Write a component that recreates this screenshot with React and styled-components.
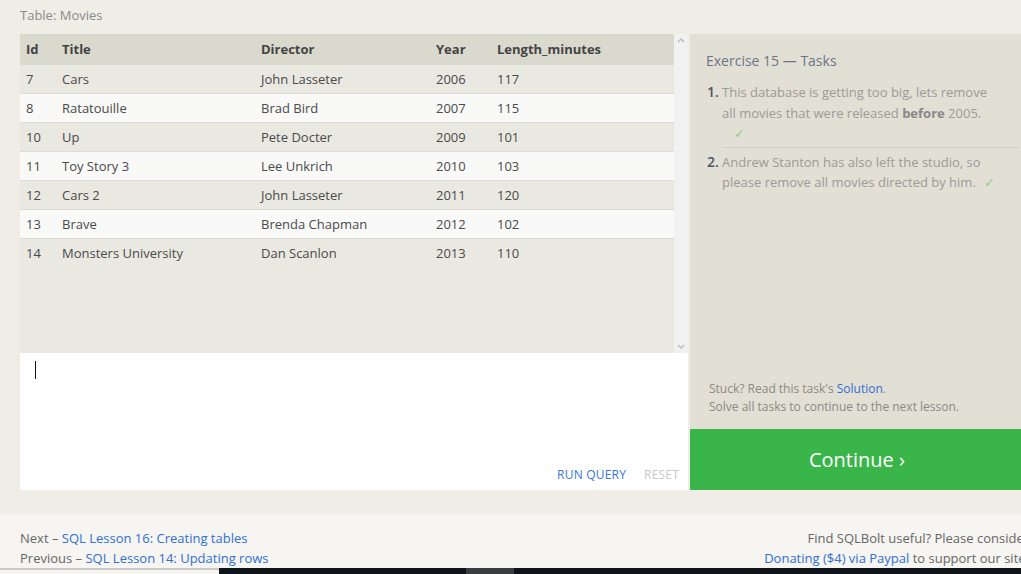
import styled, { createGlobalStyle } from 'styled-components';

const GlobalStyle = createGlobalStyle`
  html, body {
    margin: 0;
    padding: 0;
    overflow: hidden;
    background: #efede6;
  }
  body {
    font-family: "Open Sans", "Noto Sans", sans-serif;
    color: #444;
  }
  a {
    color: #2f6fd6;
    text-decoration: none;
  }
`;

const movies = [
  [7, 'Cars', 'John Lasseter', 2006, 117],
  [8, 'Ratatouille', 'Brad Bird', 2007, 115],
  [10, 'Up', 'Pete Docter', 2009, 101],
  [11, 'Toy Story 3', 'Lee Unkrich', 2010, 103],
  [12, 'Cars 2', 'John Lasseter', 2011, 120],
  [13, 'Brave', 'Brenda Chapman', 2012, 102],
  [14, 'Monsters University', 'Dan Scanlon', 2013, 110],
];

const columns = [
  { key: 'Id', width: 42, pad: 6 },
  { key: 'Title', width: 199 },
  { key: 'Director', width: 175 },
  { key: 'Year', width: 61 },
  { key: 'Length_minutes' },
];

const Page = styled.div`
  width: 1021px;
  height: 574px;
  display: flex;
  flex-direction: column;
  overflow: hidden;
`;

const Main = styled.div`
  padding: 5px 0 24px 20px;
`;

const Caption = styled.div`
  font-size: 13px;
  color: #8a8a8a;
  height: 29px;
  line-height: 20px;
`;

const Workspace = styled.div`
  display: grid;
  grid-template-columns: 668px 340px;
  column-gap: 2px;
`;

const LeftCol = styled.div`
  display: flex;
  flex-direction: column;
`;

const TableArea = styled.div`
  display: flex;
  height: 319px;
`;

const TableWrap = styled.div`
  flex: 1;
  background: #e9e8e1;
`;

const Table = styled.table`
  width: 100%;
  table-layout: fixed;
  border-collapse: collapse;
  font-size: 13px;
`;

const Th = styled.th`
  text-align: left;
  font-weight: 700;
  color: #444;
  background: #dad9ce;
  height: 31px;
  padding: 0 0 1px ${(p) => p.$pad || 0}px;
  box-sizing: border-box;
  width: ${(p) => (p.$w ? `${p.$w}px` : 'auto')};
`;

const Tr = styled.tr`
  background: ${(p) => (p.$odd ? '#f9f9f8' : '#e9e8e1')};
  border-bottom: 1px solid ${(p) => (p.$last ? 'transparent' : '#dcdbd5')};
`;

const Td = styled.td`
  height: 28px;
  padding: 0 0 0 ${(p) => p.$pad || 0}px;
  color: #4a4a4a;
  white-space: nowrap;
`;

const Scrollbar = styled.div`
  width: 14px;
  background: #f1f1f1;
  display: flex;
  flex-direction: column;
  justify-content: space-between;
  align-items: center;
  padding: 3px 0;
`;

const Editor = styled.div`
  height: 137px;
  background: #fff;
  display: flex;
  flex-direction: column;
  justify-content: space-between;
`;

const Caret = styled.div`
  width: 1px;
  height: 18px;
  background: #111;
  margin: 8px 0 0 15px;
`;

const EditorActions = styled.div`
  display: flex;
  justify-content: flex-end;
  gap: 18px;
  padding: 0 9px 7px 0;
`;

const ActionButton = styled.span`
  font-size: 12px;
  letter-spacing: 0.2px;
  color: ${(p) => (p.$muted ? '#c8c8c8' : '#3a76d8')};
`;

const RightCol = styled.div`
  display: flex;
  flex-direction: column;
`;

const TaskPanel = styled.div`
  height: 395px;
  background: #e2dfd4;
  padding: 17px 12px 0 16px;
  box-sizing: border-box;
  display: flex;
  flex-direction: column;
`;

const PanelTitle = styled.div`
  font-size: 14px;
  color: #6b7585;
  margin-bottom: 8px;
`;

const TaskList = styled.ol`
  margin: 0 0 0 16px;
  padding: 0;
  list-style: none;
`;

const Task = styled.li`
  display: flex;
  font-size: 13px;
  line-height: 20.5px;
  color: #9b9b98;
  padding: 4px 0 3px;
  border-bottom: 1px solid ${(p) => (p.$last ? 'transparent' : '#d3d0c6')};
`;

const TaskNum = styled.span`
  width: 15px;
  margin-left: -15px;
  flex: none;
  color: #4c5566;
  font-size: 14px;
  font-weight: 600;
`;

const TaskText = styled.span`
  flex: 1;
  padding-right: 16px;
  b {
    color: #888;
  }
`;

const Check = styled.span`
  color: #8fcf8f;
  margin-left: ${(p) => (p.$block ? 12 : 8)}px;
  display: ${(p) => (p.$block ? 'block' : 'inline')};
`;

const Help = styled.div`
  margin-top: auto;
  padding: 0 0 13px 3px;
  font-size: 12px;
  line-height: 18px;
  color: #8c8a84;
`;

const ContinueButton = styled.div`
  height: 61px;
  background: #3ab54a;
  color: #fff;
  font-size: 20px;
  display: flex;
  align-items: center;
  justify-content: center;
  padding-left: 2px;
  margin-right: 8px;
`;

const Footer = styled.div`
  background: #f6f5f1;
  height: 54px;
  display: flex;
  justify-content: space-between;
  padding: 14px 0 0 20px;
  box-sizing: border-box;
  font-size: 13px;
  line-height: 20px;
  color: #666;
  width: 1029px;
`;

const FooterRight = styled.div`
  text-align: right;
  white-space: nowrap;
`;

const BottomStrip = styled.div`
  height: 6px;
  display: grid;
  grid-template-columns: 219px 247px 48px 1fr;
`;

const StripPart = styled.div`
  background: ${(p) => p.$c};
  ${(p) => p.$line && 'border-top: 2px solid #c9c9c9; background: #f6f5f1;'}
`;

function Chevron({ up }) {
  return (
    <svg width="8" height="6" viewBox="0 0 8 6">
      <path
        d={up ? 'M1 5 L4 2 L7 5' : 'M1 1 L4 4 L7 1'}
        fill="none"
        stroke="#bdbdbd"
        strokeWidth="1.5"
      />
    </svg>
  );
}

export default function App() {
  return (
    <Page>
      <GlobalStyle />
      <Main>
        <Caption>Table: Movies</Caption>
        <Workspace>
          <LeftCol>
            <TableArea>
              <TableWrap>
                <Table>
                  <thead>
                    <tr>
                      {columns.map((c) => (
                        <Th key={c.key} $pad={c.pad} $w={c.width}>
                          {c.key}
                        </Th>
                      ))}
                    </tr>
                  </thead>
                  <tbody>
                    {movies.map((m, i) => (
                      <Tr key={m[0]} $odd={i % 2 === 1} $last={i === movies.length - 1}>
                        {m.map((v, j) => (
                          <Td key={j} $pad={columns[j].pad}>
                            {v}
                          </Td>
                        ))}
                      </Tr>
                    ))}
                  </tbody>
                </Table>
              </TableWrap>
              <Scrollbar>
                <Chevron up />
                <Chevron />
              </Scrollbar>
            </TableArea>
            <Editor>
              <Caret />
              <EditorActions>
                <ActionButton>RUN QUERY</ActionButton>
                <ActionButton $muted>RESET</ActionButton>
              </EditorActions>
            </Editor>
          </LeftCol>
          <RightCol>
            <TaskPanel>
              <PanelTitle>Exercise 15 — Tasks</PanelTitle>
              <TaskList>
                <Task>
                  <TaskNum>1.</TaskNum>
                  <TaskText>
                    This database is getting too big, lets remove all movies that were released{' '}
                    <b>before</b> 2005.
                    <Check $block>✓</Check>
                  </TaskText>
                </Task>
                <Task $last>
                  <TaskNum>2.</TaskNum>
                  <TaskText>
                    Andrew Stanton has also left the studio, so please remove all movies directed by him.
                    <Check>✓</Check>
                  </TaskText>
                </Task>
              </TaskList>
              <Help>
                Stuck? Read this task's <a href="#">Solution</a>.
                <br />
                Solve all tasks to continue to the next lesson.
              </Help>
            </TaskPanel>
            <ContinueButton>Continue ›</ContinueButton>
          </RightCol>
        </Workspace>
      </Main>
      <Footer>
        <div>
          Next – <a href="#">SQL Lesson 16: Creating tables</a>
          <br />
          Previous – <a href="#">SQL Lesson 14: Updating rows</a>
        </div>
        <FooterRight>
          Find SQLBolt useful? Please consider
          <br />
          <a href="#">Donating ($4) via Paypal</a> to support our site.
        </FooterRight>
      </Footer>
      <BottomStrip>
        <StripPart $line />
        <StripPart $c="#0f1418" />
        <StripPart $c="#3a3d40" />
        <StripPart $c="#0f1418" />
      </BottomStrip>
    </Page>
  );
}
